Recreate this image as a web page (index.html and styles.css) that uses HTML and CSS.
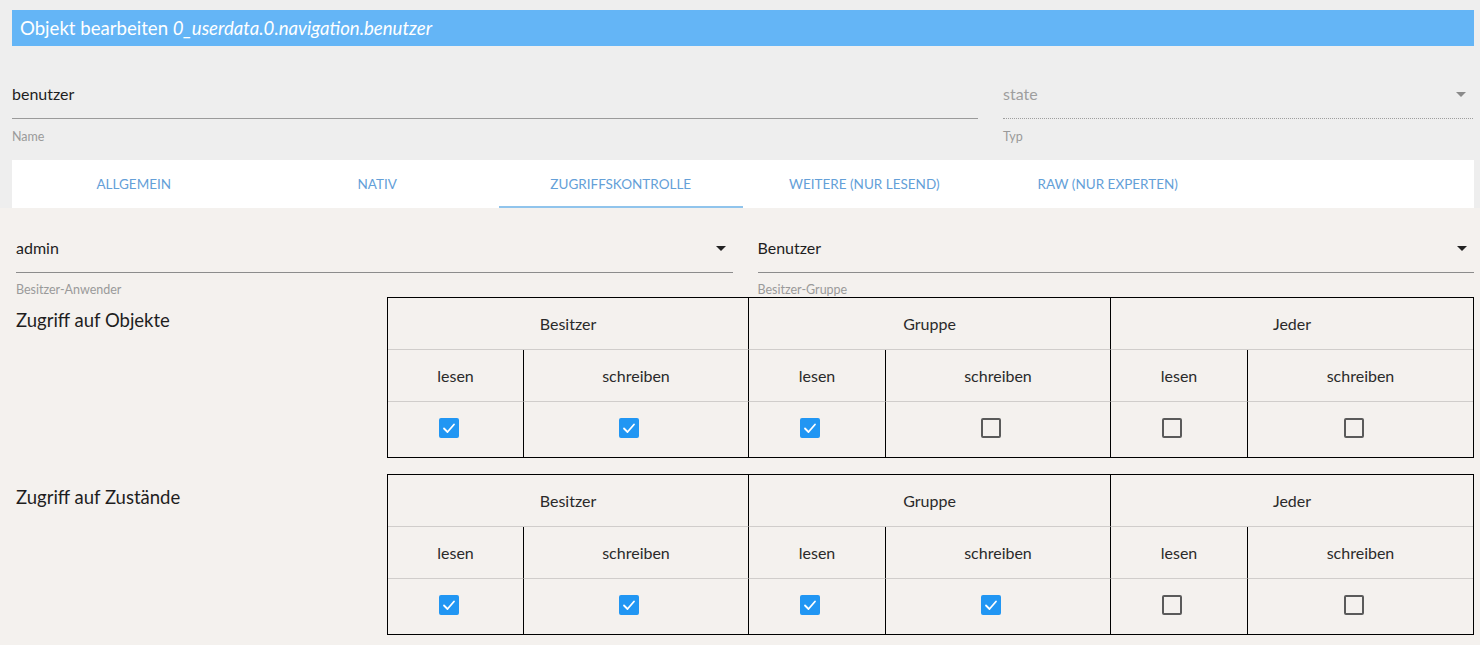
FILE: index.html
```html
<!DOCTYPE html>
<html lang="de">
<head>
<meta charset="utf-8">
<title>Objekt bearbeiten</title>
<link rel="stylesheet" href="styles.css">
</head>
<body>
<div class="dialog">
  <div class="top">
    <div class="title">Objekt bearbeiten <i>0_userdata.0.navigation.benutzer</i></div>
    <div class="meta">
      <div class="field">
        <div class="input">benutzer</div>
        <div class="label">Name</div>
      </div>
      <div class="field">
        <div class="input input-disabled">state<span class="arrow arrow-gray"></span></div>
        <div class="label">Typ</div>
      </div>
    </div>
    <div class="tabs">
      <div class="tab">Allgemein</div>
      <div class="tab">Nativ</div>
      <div class="tab tab-active">Zugriffskontrolle</div>
      <div class="tab">Weitere (nur lesend)</div>
      <div class="tab">RAW (nur Experten)</div>
    </div>
  </div>
  <div class="body">
    <div class="owners">
      <div class="field">
        <div class="select">admin<span class="arrow"></span></div>
        <div class="label label-small">Besitzer-Anwender</div>
      </div>
      <div class="field">
        <div class="select">Benutzer<span class="arrow"></span></div>
        <div class="label label-small">Besitzer-Gruppe</div>
      </div>
    </div>

    <div class="section">
      <div class="section-title">Zugriff auf Objekte</div>
      <div class="acl">
        <div class="cell head">Besitzer</div>
        <div class="cell head group">Gruppe</div>
        <div class="cell head group">Jeder</div>
        <div class="cell sub">lesen</div>
        <div class="cell sub split">schreiben</div>
        <div class="cell sub group">lesen</div>
        <div class="cell sub split">schreiben</div>
        <div class="cell sub group">lesen</div>
        <div class="cell sub split">schreiben</div>
        <div class="cell chk"><span class="cb cb-on"><svg viewBox="0 0 20 20"><polyline points="5,10.5 8.5,14 15,6.5"/></svg></span></div>
        <div class="cell chk split"><span class="cb cb-on"><svg viewBox="0 0 20 20"><polyline points="5,10.5 8.5,14 15,6.5"/></svg></span></div>
        <div class="cell chk group"><span class="cb cb-on"><svg viewBox="0 0 20 20"><polyline points="5,10.5 8.5,14 15,6.5"/></svg></span></div>
        <div class="cell chk split"><span class="cb"></span></div>
        <div class="cell chk group"><span class="cb"></span></div>
        <div class="cell chk split"><span class="cb"></span></div>
      </div>
    </div>

    <div class="section section-second">
      <div class="section-title">Zugriff auf Zustände</div>
      <div class="acl">
        <div class="cell head">Besitzer</div>
        <div class="cell head group">Gruppe</div>
        <div class="cell head group">Jeder</div>
        <div class="cell sub">lesen</div>
        <div class="cell sub split">schreiben</div>
        <div class="cell sub group">lesen</div>
        <div class="cell sub split">schreiben</div>
        <div class="cell sub group">lesen</div>
        <div class="cell sub split">schreiben</div>
        <div class="cell chk"><span class="cb cb-on"><svg viewBox="0 0 20 20"><polyline points="5,10.5 8.5,14 15,6.5"/></svg></span></div>
        <div class="cell chk split"><span class="cb cb-on"><svg viewBox="0 0 20 20"><polyline points="5,10.5 8.5,14 15,6.5"/></svg></span></div>
        <div class="cell chk group"><span class="cb cb-on"><svg viewBox="0 0 20 20"><polyline points="5,10.5 8.5,14 15,6.5"/></svg></span></div>
        <div class="cell chk split"><span class="cb cb-on"><svg viewBox="0 0 20 20"><polyline points="5,10.5 8.5,14 15,6.5"/></svg></span></div>
        <div class="cell chk group"><span class="cb"></span></div>
        <div class="cell chk split"><span class="cb"></span></div>
      </div>
    </div>
  </div>
</div>
</body>
</html>
```

FILE: styles.css
```css
* { box-sizing: border-box; }
html, body { margin: 0; padding: 0; }
body {
  font-family: Lato, "Open Sans", sans-serif;
  color: #1e1e1e;
  background: #f4f1ee;
  width: 1480px;
  height: 645px;
  overflow: hidden;
}
.top {
  background: #eeeeee;
  padding: 10px 6px 0 12px;
}
.title {
  height: 36px;
  background: #64b5f6;
  color: #ffffff;
  font-size: 18.6px;
  line-height: 36px;
  padding-left: 8px;
}
.title i { font-style: italic; }

.meta {
  display: grid;
  grid-template-columns: 1fr 470px;
  column-gap: 25px;
  padding-top: 36px;
  padding-bottom: 15px;
  padding-right: 1px;
}
.input {
  position: relative;
  font-size: 16px;
  line-height: 24px;
  height: 37px;
  padding-bottom: 12px;
  border-bottom: 1px solid #9a9a9a;
  color: #1e1e1e;
}
.input-disabled {
  color: #9e9e9e;
  border-bottom: 1px dotted #9e9e9e;
}
.label {
  font-size: 12.5px;
  line-height: 16px;
  margin-top: 10px;
  color: #9a9a9a;
}
.arrow {
  position: absolute;
  right: 7px;
  top: 10px;
  width: 0;
  height: 0;
  border-left: 5px solid transparent;
  border-right: 5px solid transparent;
  border-top: 5px solid #222;
}
.arrow-gray { border-top-color: #8a8a8a; }

.tabs {
  display: flex;
  height: 48px;
  background: #ffffff;
}
.tab {
  width: 243.5px;
  height: 48px;
  display: flex;
  align-items: center;
  justify-content: center;
  text-transform: uppercase;
  font-size: 13.5px;
  color: #64a0d8;
}
.tab-active {
  border-bottom: 2px solid #90c4ec;
  padding-top: 2px;
}

.body {
  padding: 0 6px 12px 16px;
}
.owners {
  display: grid;
  grid-template-columns: 1fr 1fr;
  column-gap: 25px;
  padding-top: 28px;
}
.select {
  position: relative;
  font-size: 16px;
  line-height: 24px;
  height: 37px;
  padding-bottom: 12px;
  border-bottom: 1px solid #8c8c8c;
}
.label-small {
  line-height: 14px;
  margin-top: 10px;
  height: 14px;
}

.section {
  display: flex;
}
.section-second { margin-top: 16px; }
.section-title {
  width: 371px;
  flex: none;
  font-size: 18.5px;
  line-height: 24px;
  padding-top: 11px;
  color: #1e1e1e;
}
.acl {
  flex: 1;
  display: grid;
  grid-template-columns: 135px 225px 137px 225px 137px 1fr;
  grid-template-rows: 52px 52px 55px;
  border: 1px solid #000;
}
.cell {
  display: flex;
  align-items: center;
  justify-content: center;
  font-size: 16px;
  color: #2a2a2a;
}
.head {
  grid-column: span 2;
  border-bottom: 1px solid #d0cdcb;
}
.sub {
  border-bottom: 1px solid #d0cdcb;
}
.group { border-left: 1px solid #000; }
.split { border-left: 1px solid #000; }
.chk {
  padding-right: 14px;
  padding-bottom: 4px;
}
.cb {
  width: 20px;
  height: 20px;
  border: 2px solid #5a5a5a;
  border-radius: 2px;
  display: block;
}
.cb-on {
  background: #2196f3;
  border-color: #2196f3;
}
.cb svg {
  display: block;
  width: 20px;
  height: 20px;
  margin: -2px;
}
.cb polyline {
  fill: none;
  stroke: #ffffff;
  stroke-width: 1.8;
  stroke-linecap: round;
  stroke-linejoin: round;
}
```
